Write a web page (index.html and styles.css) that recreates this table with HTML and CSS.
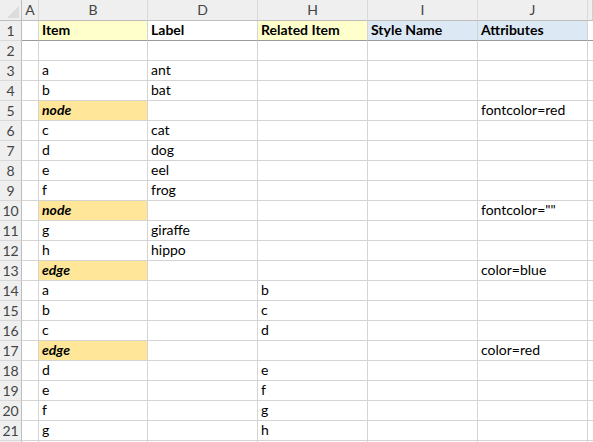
FILE: index.html
```html
<!DOCTYPE html>
<html>
<head>
<meta charset="utf-8">
<link rel="stylesheet" href="styles.css">
</head>
<body>
<div class="sheet">
  <div class="row colhead">
    <div class="c rh corner"><svg class="tri" width="12" height="12" viewBox="0 0 12 12"><polygon points="12,0 12,12 0,12" fill="#dcdcdc"/></svg></div>
    <div class="c">A</div><div class="c">B</div><div class="c">D</div><div class="c">H</div><div class="c">I</div><div class="c">J</div><div class="c end"></div>
  </div>
  <div class="row head">
    <div class="c rh">1</div><div class="c"></div><div class="c yl">Item</div><div class="c">Label</div><div class="c yl">Related Item</div><div class="c bl">Style Name</div><div class="c bl">Attributes</div><div class="c end"></div>
  </div>
  <div class="row"><div class="c rh">2</div><div class="c"></div><div class="c"></div><div class="c"></div><div class="c"></div><div class="c"></div><div class="c"></div><div class="c end"></div></div>
  <div class="row"><div class="c rh">3</div><div class="c"></div><div class="c">a</div><div class="c">ant</div><div class="c"></div><div class="c"></div><div class="c"></div><div class="c end"></div></div>
  <div class="row"><div class="c rh">4</div><div class="c"></div><div class="c">b</div><div class="c">bat</div><div class="c"></div><div class="c"></div><div class="c"></div><div class="c end"></div></div>
  <div class="row"><div class="c rh">5</div><div class="c"></div><div class="c kw">node</div><div class="c"></div><div class="c"></div><div class="c"></div><div class="c">fontcolor=red</div><div class="c end"></div></div>
  <div class="row"><div class="c rh">6</div><div class="c"></div><div class="c">c</div><div class="c">cat</div><div class="c"></div><div class="c"></div><div class="c"></div><div class="c end"></div></div>
  <div class="row"><div class="c rh">7</div><div class="c"></div><div class="c">d</div><div class="c">dog</div><div class="c"></div><div class="c"></div><div class="c"></div><div class="c end"></div></div>
  <div class="row"><div class="c rh">8</div><div class="c"></div><div class="c">e</div><div class="c">eel</div><div class="c"></div><div class="c"></div><div class="c"></div><div class="c end"></div></div>
  <div class="row"><div class="c rh">9</div><div class="c"></div><div class="c">f</div><div class="c">frog</div><div class="c"></div><div class="c"></div><div class="c"></div><div class="c end"></div></div>
  <div class="row"><div class="c rh">10</div><div class="c"></div><div class="c kw">node</div><div class="c"></div><div class="c"></div><div class="c"></div><div class="c">fontcolor=""</div><div class="c end"></div></div>
  <div class="row"><div class="c rh">11</div><div class="c"></div><div class="c">g</div><div class="c">giraffe</div><div class="c"></div><div class="c"></div><div class="c"></div><div class="c end"></div></div>
  <div class="row"><div class="c rh">12</div><div class="c"></div><div class="c">h</div><div class="c">hippo</div><div class="c"></div><div class="c"></div><div class="c"></div><div class="c end"></div></div>
  <div class="row"><div class="c rh">13</div><div class="c"></div><div class="c kw">edge</div><div class="c"></div><div class="c"></div><div class="c"></div><div class="c">color=blue</div><div class="c end"></div></div>
  <div class="row"><div class="c rh">14</div><div class="c"></div><div class="c">a</div><div class="c"></div><div class="c">b</div><div class="c"></div><div class="c"></div><div class="c end"></div></div>
  <div class="row"><div class="c rh">15</div><div class="c"></div><div class="c">b</div><div class="c"></div><div class="c">c</div><div class="c"></div><div class="c"></div><div class="c end"></div></div>
  <div class="row"><div class="c rh">16</div><div class="c"></div><div class="c">c</div><div class="c"></div><div class="c">d</div><div class="c"></div><div class="c"></div><div class="c end"></div></div>
  <div class="row"><div class="c rh">17</div><div class="c"></div><div class="c kw">edge</div><div class="c"></div><div class="c"></div><div class="c"></div><div class="c">color=red</div><div class="c end"></div></div>
  <div class="row"><div class="c rh">18</div><div class="c"></div><div class="c">d</div><div class="c"></div><div class="c">e</div><div class="c"></div><div class="c"></div><div class="c end"></div></div>
  <div class="row"><div class="c rh">19</div><div class="c"></div><div class="c">e</div><div class="c"></div><div class="c">f</div><div class="c"></div><div class="c"></div><div class="c end"></div></div>
  <div class="row"><div class="c rh">20</div><div class="c"></div><div class="c">f</div><div class="c"></div><div class="c">g</div><div class="c"></div><div class="c"></div><div class="c end"></div></div>
  <div class="row"><div class="c rh">21</div><div class="c"></div><div class="c">g</div><div class="c"></div><div class="c">h</div><div class="c"></div><div class="c"></div><div class="c end"></div></div>
  <div class="row"><div class="c rh"></div><div class="c"></div><div class="c"></div><div class="c"></div><div class="c"></div><div class="c"></div><div class="c"></div><div class="c end"></div></div>
</div>
</body>
</html>
```
FILE: styles.css
```css
html, body {
  margin: 0;
  padding: 0;
  background: #ffffff;
  overflow: hidden;
}
.sheet {
  width: 593px;
  height: 442px;
  overflow: hidden;
  font-family: Lato, "Open Sans", sans-serif;
  font-size: 14px;
  color: #000;
}
.row {
  display: grid;
  grid-template-columns: 22px 17px 109px 110px 110px 110px 110px 5px;
  height: 20px;
}
.c {
  box-sizing: border-box;
  border-right: 1px solid #d4d4d4;
  border-bottom: 1px solid #d4d4d4;
  display: flex;
  align-items: flex-end;
  padding: 0 3px 1px 3px;
  white-space: nowrap;
  overflow: hidden;
  line-height: 18px;
}
.c.end {
  border-right: none;
  padding: 0;
}
.colhead {
  height: 21px;
}
.colhead .c {
  background: #efefef;
  color: #444;
  justify-content: center;
  align-items: center;
  padding: 0;
  border-right: 1px solid #d9d9d9;
  border-bottom: 1px solid #bdbdbd;
  font-size: 14px;
}
.colhead .c.end {
  border-right: 1px solid #d0d0d0;
}
.rh {
  background: #efefef;
  color: #444;
  justify-content: center;
  padding: 0;
  border-right: 1px solid #bdbdbd !important;
  border-bottom: 1px solid #d9d9d9;
}
.corner {
  position: relative;
}
.tri {
  position: absolute;
  right: 2px;
  bottom: 2px;
}
.head .c {
  font-weight: 700;
  border-bottom: 1px solid #9a9a9a;
}
.head .rh {
  font-weight: 400;
  border-bottom: 1px solid #d9d9d9;
}
.yl {
  background: #ffffcc;
}
.bl {
  background: #dde8f5;
}
.kw {
  background: #ffe699;
  font-weight: 700;
  font-style: italic;
}
```
